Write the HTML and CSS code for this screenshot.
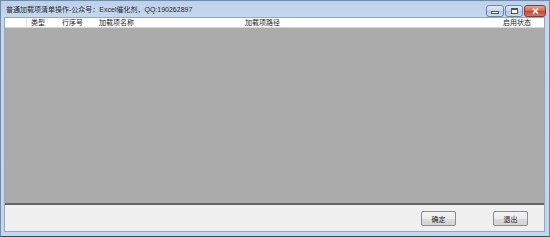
FILE: index.html
```html
<!DOCTYPE html>
<html>
<head>
<meta charset="utf-8">
<link rel="stylesheet" href="styles.css">
</head>
<body>
<div class="window">
  <div class="titlebar">
    <div class="title">普通加载项清单操作-公众号：Excel催化剂，QQ:190262897</div>
    <div class="controls">
      <div class="cbtn min"><span class="glyph-min"></span></div>
      <div class="cbtn max"><span class="glyph-max"></span></div>
      <div class="cbtn close"><svg width="7" height="6" viewBox="0 0 7 6"><path d="M1 0.5 L6 5.5 M6 0.5 L1 5.5" stroke="#fff" stroke-width="1.6"/></svg></div>
    </div>
  </div>
  <div class="client">
    <div class="list">
      <div class="header">
        <div class="col c0"></div>
        <div class="col c1">类型</div>
        <div class="col c2">行序号</div>
        <div class="col c3">加载项名称</div>
        <div class="col c4">加载项路径</div>
        <div class="col c5">启用状态</div>
      </div>
      <div class="listbody"></div>
    </div>
    <div class="footer">
      <button class="btn ok">确定</button>
      <button class="btn exit">退出</button>
    </div>
  </div>
</div>
</body>
</html>
```
FILE: styles.css
```css
html, body {
  margin: 0;
  padding: 0;
  width: 550px;
  height: 237px;
  overflow: hidden;
  font-family: "Noto Sans CJK SC", "Noto Sans", sans-serif;
}
.window {
  width: 550px;
  height: 237px;
  box-sizing: border-box;
  background: linear-gradient(to bottom, #bdd1ea 0px, #c7d8ee 18px, #c4d6ec 100%);
  border: 1px solid #6f8caf;
  border-bottom-color: #27505c;
  display: flex;
  flex-direction: column;
}
.titlebar {
  height: 16px;
  flex: none;
  display: flex;
  align-items: center;
  justify-content: space-between;
  padding: 0 3px 0 5px;
}
.title {
  font-family: "Liberation Sans", "Noto Sans CJK SC", sans-serif;
  font-size: 7px;
  color: #2a2a2a;
  line-height: 10px;
  margin-top: 1px;
  white-space: nowrap;
}
.controls {
  display: flex;
  gap: 1px;
  align-self: flex-start;
  margin-top: 4px;
}
.cbtn {
  height: 10px;
  border: 1px solid #6d86a8;
  border-radius: 3px;
  background: linear-gradient(to bottom, #e4edf8, #c4d4ea 50%, #b3c6e2 51%, #cbd9ee);
  display: flex;
  align-items: center;
  justify-content: center;
}
.min, .max { width: 16px; }
.close {
  width: 20px;
  border-color: #8a3a2e;
  background: linear-gradient(to bottom, #e8a595, #d1644d 50%, #c2442c 51%, #d57a5f);
}
.glyph-min {
  width: 6px;
  height: 1px;
  background: #fff;
  border: 1px solid #3e5876;
  margin-top: 3px;
}
.glyph-max {
  width: 5px;
  height: 3px;
  border: 1px solid #3e5876;
  border-top-width: 2px;
  background: #fff;
}
.client {
  flex: 1;
  margin: 0 4px 4px 3px;
  background: #f0f0f0;
  border: 1px solid #8fa6c4;
  display: flex;
  flex-direction: column;
}
.list {
  flex: 1;
  display: flex;
  flex-direction: column;
  border-bottom: 2px solid #656565;
}
.header {
  height: 9px;
  flex: none;
  display: flex;
  background: #fff;
  border-bottom: 1px solid #d5d5d5;
  font-size: 7px;
  line-height: 9px;
  color: #1a1a1a;
}
.col {
  box-sizing: border-box;
  white-space: nowrap;
  padding-left: 4px;
}
.c0 { width: 22px; border-right: 1px solid #e4e4e4; }
.c1 { width: 31px; }
.c2 { width: 37px; }
.c3 { width: 146px; }
.c4 { width: 258px; }
.c5 { flex: 1; }
.listbody {
  flex: 1;
  background: #ababab;
}
.footer {
  height: 26px;
  flex: none;
  display: flex;
  align-items: center;
  justify-content: flex-end;
  padding-right: 16px;
  gap: 37px;
}
.btn {
  width: 35px;
  height: 15px;
  padding: 0;
  font-family: inherit;
  font-size: 7px;
  line-height: 12px;
  color: #1a1a1a;
  border: 1px solid #8d8d8d;
  border-radius: 2px;
  background: linear-gradient(to bottom, #f4f4f4, #ebebeb 50%, #dcdcdc 51%, #d3d3d3);
  margin-top: 1px;
}
```
